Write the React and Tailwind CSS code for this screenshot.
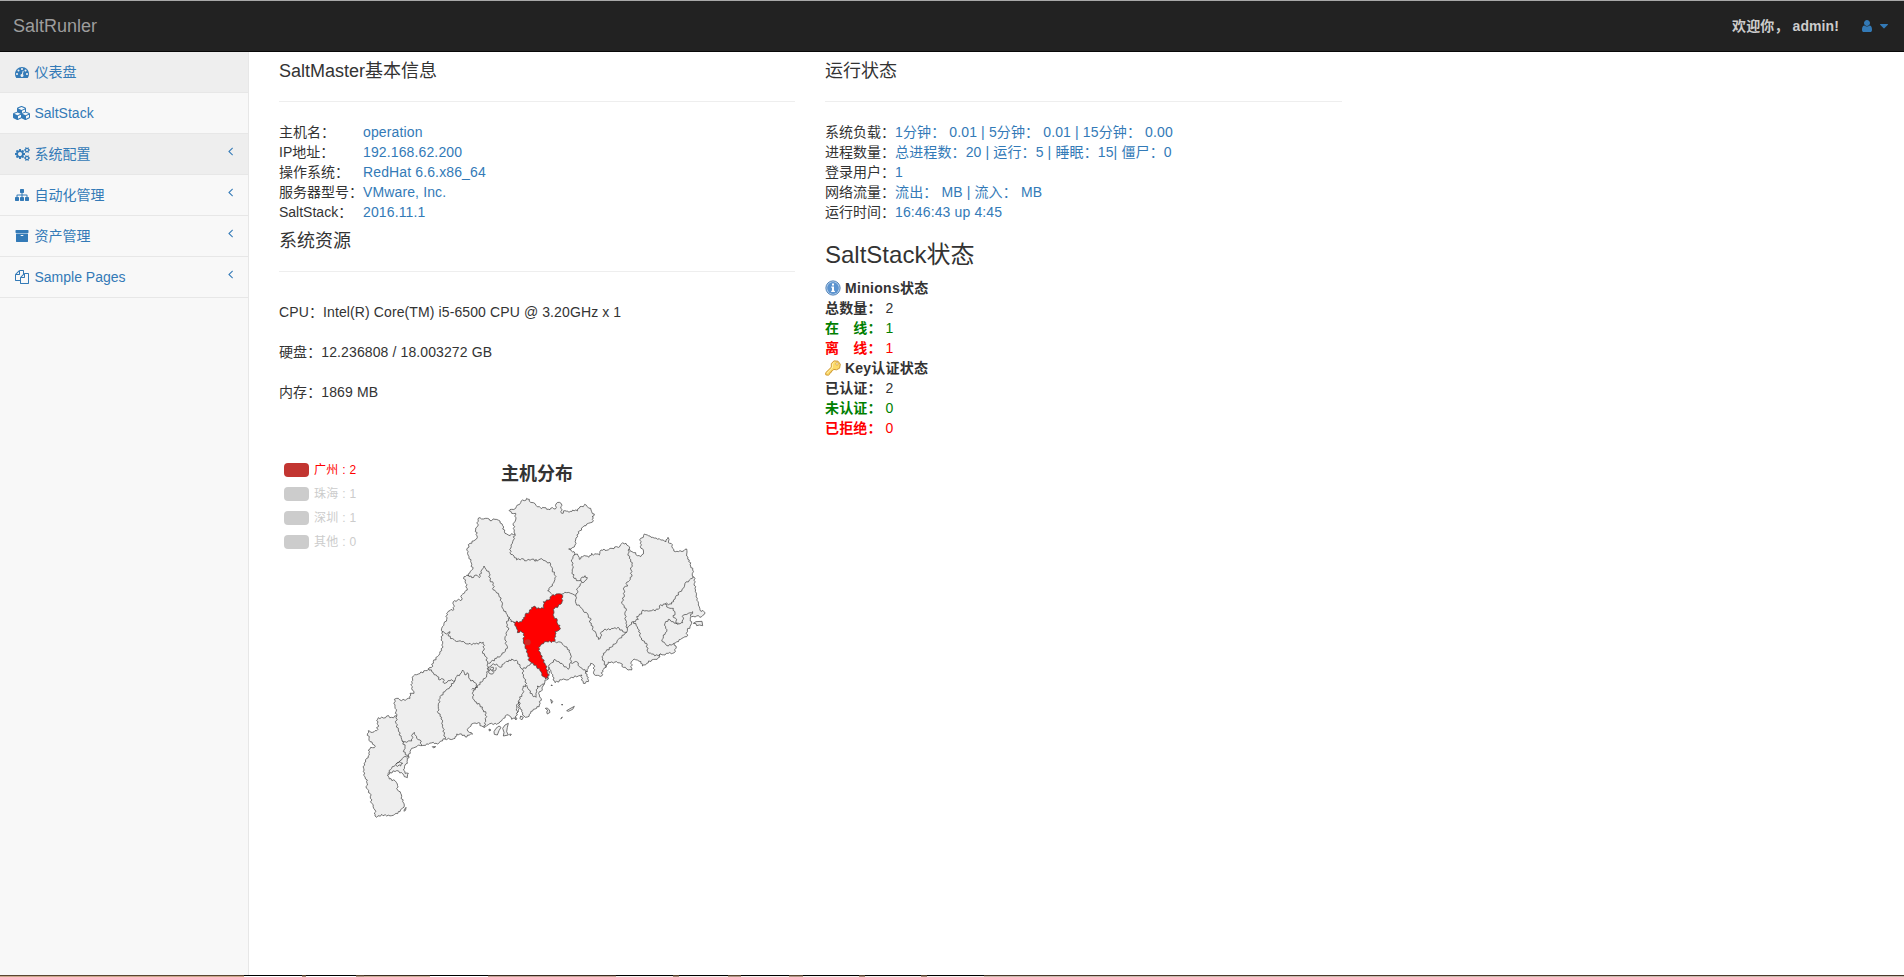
import React from 'react';

const ICONS = {
  dashboard: { w: 1792, d: 'M384 1152q0-53-37.5-90.5t-90.5-37.5-90.5 37.5-37.5 90.5 37.5 90.5 90.5 37.5 90.5-37.5 37.5-90.5zm192-448q0-53-37.5-90.5t-90.5-37.5-90.5 37.5-37.5 90.5 37.5 90.5 90.5 37.5 90.5-37.5 37.5-90.5zm428 481l101-382q6-26-7.5-48.5t-38.5-29.5-48 6.5-30 39.5l-101 382q-60 5-107 43.5t-63 98.5q-20 77 20 146t117 89 146-20 89-117q16-60-6-117t-72-91zm660-33q0-53-37.5-90.5t-90.5-37.5-90.5 37.5-37.5 90.5 37.5 90.5 90.5 37.5 90.5-37.5 37.5-90.5zm-640-640q0-53-37.5-90.5t-90.5-37.5-90.5 37.5-37.5 90.5 37.5 90.5 90.5 37.5 90.5-37.5 37.5-90.5zm448 192q0-53-37.5-90.5t-90.5-37.5-90.5 37.5-37.5 90.5 37.5 90.5 90.5 37.5 90.5-37.5 37.5-90.5zm320 448q0 261-141 483-19 29-54 29h-1402q-35 0-54-29-141-221-141-483 0-182 71-348t191-286 286-191 348-71 348 71 286 191 191 286 71 348z' },
  cubes: { w: 2304, d: 'M640 1632l384-192v-314l-384 164v342zm-64-454l404-173-404-173-404 173zm1088 454l384-192v-314l-384 164v342zm-64-454l404-173-404-173-404 173zm-448-293l384-165v-266l-384 164v267zm-64-379l441-189-441-189-441 189zm1088 518v416q0 36-19 67t-52 47l-448 224q-25 14-57 14t-57-14l-448-224q-4-2-7-4-2 2-7 4l-448 224q-25 14-57 14t-57-14l-448-224q-33-16-52-47t-19-67v-416q0-38 21.5-70t56.5-48l434-186v-400q0-38 21.5-70t56.5-48l448-192q23-10 50-10t50 10l448 192q35 16 56.5 48t21.5 70v400l434 186q36 16 57 48t21 70z' },
  cogs: { w: 1920, d: 'M896 896q0-106-75-181t-181-75-181 75-75 181 75 181 181 75 181-75 75-181zm768 512q0-52-38-90t-90-38-90 38-38 90q0 53 37.5 90.5t90.5 37.5 90.5-37.5 37.5-90.5zm0-1024q0-52-38-90t-90-38-90 38-38 90q0 53 37.5 90.5t90.5 37.5 90.5-37.5 37.5-90.5zm-384 421v185q0 10-7 19.5t-16 10.5l-155 24q-11 35-32 76 34 48 90 115 7 11 7 20 0 12-7 19-23 30-82.5 89.5t-78.5 59.5q-11 0-21-7l-115-90q-37 19-77 31-11 108-23 155-7 24-30 24h-186q-11 0-20-7.5t-10-17.5l-23-153q-34-10-75-31l-118 89q-7 7-20 7-11 0-21-8-144-133-144-160 0-9 7-19 10-14 41-53t47-61q-23-44-35-82l-152-24q-10-1-17-9.5t-7-19.5v-185q0-10 7-19.5t16-10.5l155-24q11-35 32-76-34-48-90-115-7-11-7-20 0-12 7-20 22-30 82-89t79-59q11 0 21 7l115 90q34-18 77-32 11-108 23-154 7-24 30-24h186q11 0 20 7.5t10 17.5l23 153q34 10 75 31l118-89q8-7 20-7 11 0 21 8 144 133 144 160 0 8-7 19-12 16-42 54t-45 60q23 48 34 82l152 23q10 2 17 10.5t7 19.5zm640 533v140q0 16-149 31-12 27-30 52 51 113 51 138 0 4-4 7-122 71-124 71-8 0-46-47t-52-68q-20 2-30 2t-30-2q-14 21-52 68t-46 47q-2 0-124-71-4-3-4-7 0-25 51-138-18-25-30-52-149-15-149-31v-140q0-16 149-31 13-29 30-52-51-113-51-138 0-4 4-7 4-2 35-20t59-34 30-16q8 0 46 46.5t52 67.5q20-2 30-2t30 2q51-71 92-112l6-2q4 0 124 70 4 3 4 7 0 25-51 138 17 23 30 52 149 15 149 31zm0-1024v140q0 16-149 31-12 27-30 52 51 113 51 138 0 4-4 7-122 71-124 71-8 0-46-47t-52-68q-20 2-30 2t-30-2q-14 21-52 68t-46 47q-2 0-124-71-4-3-4-7 0-25 51-138-18-25-30-52-149-15-149-31v-140q0-16 149-31 13-29 30-52-51-113-51-138 0-4 4-7 4-2 35-20t59-34 30-16q8 0 46 46.5t52 67.5q20-2 30-2t30 2q51-71 92-112l6-2q4 0 124 70 4 3 4 7 0 25-51 138 17 23 30 52 149 15 149 31z' },
  sitemap: { w: 1792, d: 'M1792 1248v320q0 40-28 68t-68 28h-320q-40 0-68-28t-28-68v-320q0-40 28-68t68-28h96v-192h-512v192h96q40 0 68 28t28 68v320q0 40-28 68t-68 28h-320q-40 0-68-28t-28-68v-320q0-40 28-68t68-28h96v-192h-512v192h96q40 0 68 28t28 68v320q0 40-28 68t-68 28h-320q-40 0-68-28t-28-68v-320q0-40 28-68t68-28h96v-192q0-52 38-90t90-38h512v-192h-96q-40 0-68-28t-28-68v-320q0-40 28-68t68-28h320q40 0 68 28t28 68v320q0 40-28 68t-68 28h-96v192h512q52 0 90 38t38 90v192h96q40 0 68 28t28 68z' },
  archive: { w: 1792, d: 'M1088 832q0-26-19-45t-45-19h-256q-26 0-45 19t-19 45 19 45 45 19h256q26 0 45-19t19-45zm576-192v960q0 26-19 45t-45 19h-1408q-26 0-45-19t-19-45v-960q0-26 19-45t45-19h1408q26 0 45 19t19 45zm64-448v256q0 26-19 45t-45 19h-1536q-26 0-45-19t-19-45v-256q0-26 19-45t45-19h1536q26 0 45 19t19 45z' },
  files: { w: 1792, d: 'M1696 384q40 0 68 28t28 68v1216q0 40-28 68t-68 28h-960q-40 0-68-28t-28-68v-288h-544q-40 0-68-28t-28-68v-672q0-40 20-88t48-76l408-408q28-28 76-48t88-20h416q40 0 68 28t28 68v328q68-40 128-40h416zm-544 213l-299 299h299v-299zm-640-384l-299 299h299v-299zm196 647l316-316v-416h-384v416q0 40-28 68t-68 28h-416v640h512v-256q0-40 20-88t48-76zm956 804v-1152h-384v416q0 40-28 68t-68 28h-416v640h896z' },
  user: { w: 1792, d: 'M1536 1399q0 109-62.5 187t-150.5 78h-854q-88 0-150.5-78t-62.5-187q0-85 8.5-160.5t31.5-152 58.5-131 94-89 134.5-34.5q131 128 313 128t313-128q76 0 134.5 34.5t94 89 58.5 131 31.5 152 8.5 160.5zm-256-887q0 159-112.5 271.5t-271.5 112.5-271.5-112.5-112.5-271.5 112.5-271.5 271.5-112.5 271.5 112.5 112.5 271.5z' },
  caret: { w: 1792, d: 'M1408 704q0 26-19 45l-448 448q-19 19-45 19t-45-19l-448-448q-19-19-19-45t19-45 45-19h896q26 0 45 19t19 45z' },
  angle: { w: 700, d: 'M627 544q0 13-10 23l-393 393 393 393q10 10 10 23t-10 23l-50 50q-10 10-23 10t-23-10l-466-466q-10-10-10-23t10-23l466-466q10-10 23-10t23 10l50 50q10 10 10 23z' },
};

function Icon({ name, className = '' }) {
  const { w, d } = ICONS[name];
  return (
    <svg viewBox={`0 0 ${w} 1792`} className={`h-3.5 shrink-0 fill-current ${className}`} style={{ width: (w / 1792) * 14 }}>
      <path d={d} />
    </svg>
  );
}

const MENU = [
  { icon: 'dashboard', label: '仪表盘', active: true },
  { icon: 'cubes', label: 'SaltStack' },
  { icon: 'cogs', label: '系统配置', active: true, arrow: true },
  { icon: 'sitemap', label: '自动化管理', arrow: true },
  { icon: 'archive', label: '资产管理', arrow: true },
  { icon: 'files', label: 'Sample Pages', arrow: true },
];

const MASTER = [
  ['主机名：', 'operation'],
  ['IP地址：', '192.168.62.200'],
  ['操作系统：', 'RedHat 6.6.x86_64'],
  ['服务器型号：', 'VMware, Inc.'],
  ['SaltStack：', '2016.11.1'],
];

const STATUS = [
  ['系统负载：', '1分钟： 0.01 | 5分钟： 0.01 | 15分钟： 0.00'],
  ['进程数量：', '总进程数：20 | 运行：5 | 睡眠：15| 僵尸：0'],
  ['登录用户：', '1'],
  ['网络流量：', '流出： MB | 流入： MB'],
  ['运行时间：', '16:46:43 up 4:45'],
];

const LEGEND = [
  ['广州 : 2', true],
  ['珠海 : 1', false],
  ['深圳 : 1', false],
  ['其他 : 0', false],
];

// Map outlines, three units to a pixel. Lines marked EAST are offset by 450.
const NORTH_EAST = '27,92 35,88 47,85 52,75 62,68 67,60 73,62 80,55 88,58 92,67 100,68 108,76 118,80 125,86 132,83 140,88 150,89 158,83 166,87 168,72 178,67 184,72 183,85 185,100 195,92 207,97 218,90 232,93 240,80 250,80 254,73 262,80 272,85 275,95 283,102 276,110 280,122 272,128 265,130 258,137 248,142 240,152 235,155 233,170 227,180 225,195 217,203 206,207 214,213 222,215 223,225 232,222 238,238 248,230 258,228 266,232 275,220 280,226 290,222 298,225 303,210 312,207 320,211 330,205 342,206 350,200 360,199 368,188 378,190 385,198 388,206 396,215 407,218 412,227 422,230 430,222 430,210 423,205 421,190 422,175 430,172 433,162 442,165 450,168 458,172 468,174 478,176 482,180 490,180 498,185 504,172 507,178 505,188 517,194 518,205 526,215 540,212 552,212 560,207 561,216 560,228 568,240 572,258 578,270 578,290 585,296 583,310 585,325 586,335 592,355 595,375 600,390 612,395 613,403 605,410 590,408 575,410 571,418 575,425 570,440 562,450 560,470 550,473 542,478 530,485 522,490 528,498 526,515 518,520 505,520 495,525 482,522 475,533 465,538 455,540 440,550 427,558 423,545 412,540 402,537 394,545 395,570 380,567 370,562 362,550 350,545 340,549 325,546 318,562 308,570 305,588 292,586 282,583 282,555 272,550 265,560 262,575 256,580 265,592 265,605 250,610 244,600 246,585 235,588 215,592 200,600 190,597 165,608 158,590 153,575 148,562 145,562 147,580 145,597 135,600 133,612 129,618 127,630 116,640 123,655 118,675 110,685 100,688 92,700 82,711 72,708 65,695 60,682 57,665 50,680 52,705 45,715 35,718 28,708 20,705 10,715 0,725';
const SOUTH_WEST = '440,733 425,730 410,737 405,742 395,738 385,728 370,730 358,742 352,748 358,757 368,762 358,766 345,770 335,762 320,762 315,775 300,778 285,777 272,783 262,792 250,787 235,793 222,796 212,797 205,795 195,802 185,805 180,815 176,828 172,840 172,850 165,855 160,870 165,880 175,880 172,893 163,890 155,878 140,872 120,878 112,885 118,897 135,902 142,912 143,930 152,940 158,965 163,975 157,985 150,995 138,1000 125,1007 110,1008 95,1003 80,1012 75,1008 75,990 65,970 60,940 50,925 52,900 45,890 40,875 42,850 50,835 58,825 55,810 62,802 73,803 73,795 60,785 53,760 55,752 68,757 80,752 85,735 80,722 85,713 100,714 110,708 125,712 140,708 138,695 135,675 133,658 145,655 155,662 180,655 180,640 192,640 185,625 185,605 190,588 205,582 235,568 245,562 250,545 262,530 275,512 278,490 275,475 278,455 275,445 282,430 290,418 290,400 300,392 312,388 310,365 322,360 335,360 335,345 345,335 352,330 347,310 342,290 355,287 360,275 368,268 362,245 357,230 350,210 360,190 375,180 382,172 377,150 382,140 384,118 390,113 400,117 412,115 420,122 435,118 450,123 458,137 465,160 475,165 495,162 493,150 490,130 497,120 494,108 497,100 485,100';

const BORDERS_WEST = [
  '495,162 490,180 483,195 480,218 492,228 500,240 515,236 530,242 545,238 560,242',
  '355,285 365,293 378,285 388,293 395,270 402,258 408,268 418,280 420,300 430,310 430,330 445,340 455,365 458,385 468,400 478,412 483,425 493,428',
  '478,412 470,430 475,450 468,460 465,480 472,505 455,525 440,535 415,550',
  '275,455 290,462 300,455 295,468 315,482 335,485 355,492 375,492 400,487 402,510 398,520 408,530 413,550 415,562 410,585 405,595 385,615 382,622',
  '235,565 250,578 262,590 270,600 280,597 282,610 300,602 315,602 320,590 330,582 338,570 345,585 352,578 360,598 375,608 382,622 365,628',
  '315,602 300,620 285,635 270,650 265,680 265,700 275,712 278,735 285,777',
  '382,622 370,630 368,650 375,665 390,675 400,690 408,700 407,725 402,742',
  '415,562 425,555 440,552 450,562 465,548 475,545 485,537 503,545 510,560 518,568 540,555 547,548',
  '415,562 418,580 428,582 430,562 420,566 428,570 436,572 438,562',
  '518,568 520,590 530,610 527,620 520,618 518,640 507,660 505,690 500,700',
  '530,615 537,630 550,650 558,652 560,635 562,618 573,617 583,612',
  '140,708 138,730 145,750 155,778 165,800 160,815 175,830',
  '155,782 165,785 185,783 188,762 193,757 200,775 210,780 215,797',
  '175,830 160,832 150,842 138,852 125,865 113,880',
  '138,852 150,845 158,850 152,858 138,856',
];
const BORDERS_EAST = [
  '105,240 112,243 125,236 140,245 152,252 157,270 168,290 163,303 157,318 147,325 143,332 155,342',
  '222,225 214,240 220,260 217,275 222,295 235,302 245,305 243,295 255,287 262,293 255,302 245,308 240,318 232,325 233,338 227,348',
  '185,342 200,338 212,340 227,348 228,370 240,380 250,393 262,400 265,412 272,415 270,428 278,438 277,448 288,460 295,478 302,470 305,455 315,447 330,450 345,443 358,445 368,455 380,457',
  '388,206 385,220 388,235 397,248 393,270 395,290 385,305 378,310 383,318 372,322 373,345 365,370 378,385 375,405 378,430 382,445 380,457 372,465 355,478 345,492 310,520 308,535 318,562',
  '382,445 390,435 400,425 415,418 410,410 425,402 428,390 440,392 455,392 475,388 478,378 495,372 515,372 520,360 540,335 550,325 555,310 568,300 580,290',
  '400,425 412,440 418,450 420,470 425,480 440,490 443,515 455,522 475,528 482,522',
  '495,372 505,383 520,385 525,400 520,412 530,418 528,430 540,432 548,428 550,405 565,400 578,395 572,410',
  '535,435 520,425 505,418 495,430 497,445 500,455 490,465 487,485 505,498 522,490',
  '145,560 155,548 165,538 180,550 190,555 205,568 212,548 212,525 208,510 195,500 185,488 165,485',
  '212,548 222,547 230,545 238,560 250,570 262,574',
];
const GUANGZHOU = '41,426 60,425 72,418 75,405 88,395 95,382 102,378 110,387 125,383 132,385 130,365 145,360 155,348 168,342 185,343 188,352 185,370 175,378 160,388 162,410 172,420 173,432 180,436 178,450 165,455 167,470 163,485 140,485 125,492 115,503 122,525 135,550 142,570 145,595 137,597 130,590 120,572 100,550 88,543 83,520 75,500 70,485 72,460 62,452 52,458 50,446 44,436';
const ISLANDS = [
  '432,755 438,745 447,738 453,742 447,752 442,765 433,763',
  '458,745 465,735 475,730 472,742 470,755 475,765 460,768 462,757',
  '417,747 423,750 418,753',
  '479,762 484,763 481,767',
  '512,708 520,712 515,720 510,715',
  '497,712 501,716 497,720',
  '162,990 168,982 167,990 163,994',
  '247,800 251,804 257,800',
  '1030,430 1038,425 1056,424 1058,437 1048,435 1040,437 1038,431',
  '586,685 592,684 598,690 600,697 592,702 590,695 594,692',
  '650,692 660,686 673,679 668,688 655,694',
  '602,658 608,664 605,670',
  '632,716 637,711 635,715',
  '636,672 638,675 635,675',
  '603,615 607,616 605,618',
];

// Splits every long edge with small fixed offsets, which gives borders their uneven line.
function roughen(points, closed, shift = 0) {
  const pts = points.split(' ').map((p) => p.split(',').map(Number)).map(([x, y]) => [x + shift, y]);
  const out = [];
  const count = closed ? pts.length : pts.length - 1;
  for (let i = 0; i < count; i += 1) {
    const [x1, y1] = pts[i];
    const [x2, y2] = pts[(i + 1) % pts.length];
    const len = Math.hypot(x2 - x1, y2 - y1);
    const steps = Math.max(1, Math.round(len / 5));
    for (let s = 0; s < steps; s += 1) {
      const t = s / steps;
      const offset = s === 0 ? 0 : 2.8 * Math.sin(x1 * 12.9 + y1 * 7.3 + s * 2.4);
      out.push([x1 + (x2 - x1) * t - ((y2 - y1) / len) * offset, y1 + (y2 - y1) * t + ((x2 - x1) / len) * offset]);
    }
  }
  if (!closed) out.push(pts[pts.length - 1]);
  return out.map(([x, y]) => `${x.toFixed(1)},${y.toFixed(1)}`).join(' ');
}

const shiftEast = (points) => points.split(' ').map((p) => {
  const [x, y] = p.split(',').map(Number);
  return `${x + 450},${y}`;
}).join(' ');

function GuangdongMap() {
  return (
    <svg viewBox="0 0 1110 1050" className="ml-[71px] h-[350px] w-[370px] fill-[#eee] stroke-[#444] [stroke-linejoin:round]" strokeWidth="2.2">
      <polygon points={roughen(`${shiftEast(NORTH_EAST)} ${SOUTH_WEST}`, true)} />
      <g fill="none">
        {BORDERS_WEST.map((b) => <polyline key={b} points={roughen(b, false)} />)}
        {BORDERS_EAST.map((b) => <polyline key={b} points={roughen(b, false, 450)} />)}
      </g>
      {ISLANDS.map((b) => <polygon key={b} points={b} />)}
      <polygon points={roughen(GUANGZHOU, true, 450)} fill="#f00" />
      <circle cx="533" cy="487" r="9" fill="#c23531" stroke="none" opacity="0.8" />
    </svg>
  );
}

function InfoIcon() {
  return (
    <svg viewBox="0 0 16 16" className="mr-1 size-4 shrink-0">
      <circle cx="8" cy="8" r="7.1" fill="#c4daf0" stroke="#4a7fb8" strokeWidth="1" />
      <circle cx="8" cy="8" r="5.9" fill="#5b93cf" />
      <path d="M7 3.6h2v1.8H7zM6.3 6.5H9v4.3h.9V12H6.200v-1.200H7V7.700h-.7z" fill="#fff" />
    </svg>
  );
}

function KeyIcon() {
  return (
    <svg viewBox="0 0 16 16" className="mr-1 size-4 shrink-0">
      <path d="M9 .9L13 1.200L15.300 4.200L14.600 8.200L11.500 9.800L8.600 9.400L7.400 10.900L6.500 11L6.300 12.300L5.200 12.500L4.900 13.900L3.400 15.200L.8 14.900L.7 12.700L6.300 7.200L6.300 3.500Z" fill="#fbd968" stroke="#cf9a35" strokeWidth="1" strokeLinejoin="round" />
      <path d="M1.800 13.400L7.400 7.900L7.400 4L9.400 2.100" fill="none" stroke="#fff2b5" strokeWidth="0.900" />
      <circle cx="12" cy="3.900" r="1.200" fill="#fff" stroke="#cf9a35" strokeWidth="0.700" />
    </svg>
  );
}

function Heading({ children }) {
  return <h4 className="border-b border-[#eee] pb-5 text-lg leading-5">{children}</h4>;
}

function Stat({ label, value, className = '' }) {
  return (
    <p className={className}>
      <b className="tracking-[0.15px]">{label}</b> {value}
    </p>
  );
}

// Edge of the desktop taskbar: [width, colours of its two lines].
const TASKBAR = [
  [244, 'border-[#5a4432] bg-[#c9a98c]'],
  [58, 'border-black bg-[#fff]'],
  [4, 'border-[#5a4432] bg-[#a08a78]'],
  [50, 'border-black bg-[#fff]'],
  [8, 'border-[#5a4432] bg-[#b09a88]'],
  [66, 'border-[#3a2a20] bg-[#c9b09a]'],
  [58, 'border-black bg-[#fff]'],
  [128, 'border-[#3a2a20] bg-[#c4a69a]'],
  [57, 'border-black bg-[#f5efec]'],
  [6, 'border-[#5a4432] bg-[#a08a78]'],
  [49, 'border-black bg-[#f5efec]'],
  [13, 'border-[#5a4432] bg-[#b09a88]'],
  [48, 'border-black bg-[#f5efec]'],
  [14, 'border-[#5a4432] bg-[#b09a88]'],
  [56, 'border-black bg-[#f5efec]'],
  [6, 'border-[#5a4432] bg-[#a08a78]'],
  [56, 'border-black bg-[#f5efec]'],
  [6, 'border-[#5a4432] bg-[#a08a78]'],
  [57, 'border-black bg-[#f5efec]'],
];

export default function App() {
  return (
    <div className="flex h-[977px] w-full flex-col overflow-hidden bg-white font-['Liberation_Sans','Noto_Sans_CJK_SC',sans-serif] text-sm leading-5 text-[#333]">
      <header className="flex h-[52px] shrink-0 items-center justify-between border-t border-b border-t-[#a9a9a9] border-b-[#080808] bg-[#222] pr-[13px] pl-[13px]">
        <span className="text-lg text-[#9d9d9d]">SaltRunler</span>
        <div className="flex items-center text-[#337ab7]">
          <b className="mr-[21px] whitespace-pre tracking-[0.1px] text-[#ccc]">欢迎你， admin!</b>
          <Icon name="user" className="mr-1" />
          <Icon name="caret" className="-ml-px" />
        </div>
      </header>

      <div className="flex min-h-0 grow">
        <nav className="w-[249px] shrink-0 border-r border-[#e7e7e7] bg-[#f8f8f8] text-[#337ab7]">
          {MENU.map((m) => (
            <a key={m.label} className={`flex h-[41px] items-center border-b border-[#e7e7e7] pr-[15px] pl-[13px] ${m.active ? 'bg-[#eee]' : ''}`}>
              <span className="mr-[3.5px] flex w-[18px] justify-center"><Icon name={m.icon} /></span>
              <span className="grow">{m.label}</span>
              {m.arrow && <Icon name="angle" className="mb-1.5" />}
            </a>
          ))}
        </nav>

        <main className="flex gap-[30px] pl-[30px]">
          <section className="w-[516px] pt-[9px]">
            <Heading>SaltMaster基本信息</Heading>
            <dl className="mt-5 grid grid-cols-[84px_1fr]">
              {MASTER.map(([k, v]) => (
                <React.Fragment key={k}>
                  <dt>{k}</dt>
                  <dd className="tracking-[0.13px] text-[#337ab7]">{v}</dd>
                </React.Fragment>
              ))}
            </dl>
            <div className="pt-[9px]"><Heading>系统资源</Heading></div>
            <div className="mt-[30px] flex flex-col gap-5 tracking-[0.11px]">
              <p>CPU：Intel(R) Core(TM) i5-6500 CPU @ 3.20GHz x 1</p>
              <p>硬盘：12.236808 / 18.003272 GB</p>
              <p>内存：1869 MB</p>
            </div>
            <div className="relative mt-[50px]">
              <h3 className="pt-[11px] text-center text-lg leading-[22px] font-bold">主机分布</h3>
              <ul className="absolute top-[11px] left-[5px] flex flex-col gap-2.5 text-xs leading-[14px] tracking-[0.3px]">
                {LEGEND.map(([label, on]) => (
                  <li key={label} className={`flex items-center gap-[5px] ${on ? 'text-[#f00]' : 'text-[#ccc]'}`}>
                    <span className={`h-3.5 w-[25px] rounded ${on ? 'bg-[#c23531]' : 'bg-[#ccc]'}`} />
                    {label}
                  </li>
                ))}
              </ul>
              <div className="-mt-[5px]"><GuangdongMap /></div>
            </div>
          </section>

          <section className="w-[517px] pt-[9px]">
            <Heading>运行状态</Heading>
            <div className="mt-5">
              {STATUS.map(([k, v]) => (
                <p key={k}>{k}<span className="tracking-[0.13px] text-[#337ab7]">{v}</span></p>
              ))}
            </div>
            <h3 className="mt-5 mb-2.5 text-2xl leading-[26px]">SaltStack状态</h3>
            <p className="flex items-center font-bold tracking-[0.3px]"><InfoIcon />Minions状态</p>
            <Stat label="总数量：" value="2" />
            <Stat label="在　线：" value="1" className="text-[#008000]" />
            <Stat label="离　线：" value="1" className="text-[#f00]" />
            <p className="flex items-center font-bold tracking-[0.2px]"><KeyIcon />Key认证状态</p>
            <Stat label="已认证：" value="2" />
            <Stat label="未认证：" value="0" className="text-[#008000]" />
            <Stat label="已拒绝：" value="0" className="text-[#f00]" />
          </section>
        </main>
      </div>

      <footer className="flex h-0.5 shrink-0">
        {TASKBAR.map(([w, cls], i) => (
          <span key={i} className={`shrink-0 border-t ${cls}`} style={{ width: w }} />
        ))}
        <span className="grow border-t border-[#4a382c] bg-[#c9bbae]" />
      </footer>
    </div>
  );
}
